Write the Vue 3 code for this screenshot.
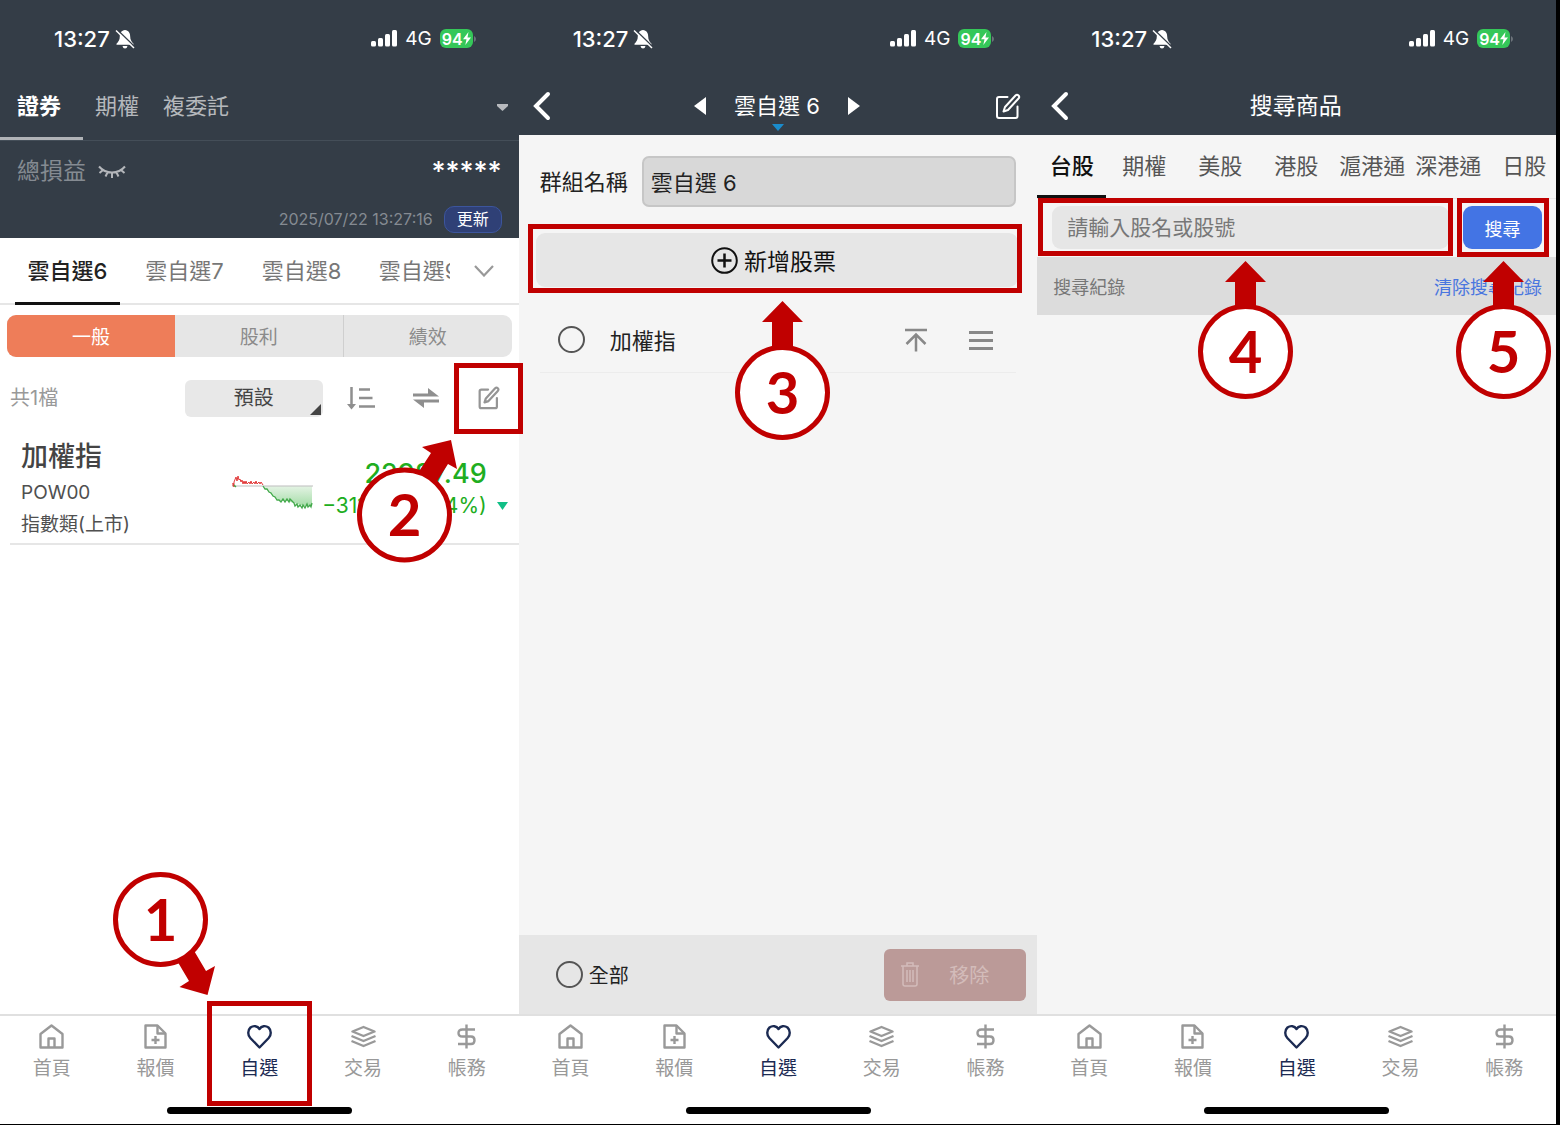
<script setup>
import { ref } from 'vue'

const screens = ['watchlist', 'edit', 'search']

const accounts = ['證券', '期權', '複委託']
const groups = ['雲自選6', '雲自選7', '雲自選8', '雲自選9']
const modes = ['一般', '股利', '績效']
const markets = ['台股', '期權', '美股', '港股', '滬港通', '深港通', '日股']

const account = ref('證券')
const group = ref('雲自選6')
const mode = ref('一般')
const market = ref('台股')

const groupName = ref('雲自選 6')
const keyword = ref('')
const picked = ref(false)
const pickAll = ref(false)

const navItems = [
    { name: '首頁', paths: ['M1.5 10 12.5 1.5 23.5 10V23.5H1.5Z', 'M9.5 23.5V14.5H15.5V23.5'] },
    { name: '報價', paths: ['M2.5 1.5H14.5L22.5 9.5V23.5H2.5Z', 'M14.5 1.5V9.5H22.5', 'M12.5 12V20M8.5 16H16.5'] },
    { name: '自選', paths: ['M12.5 23.5 3.3 14C.4 11 .8 6 3.5 3.500 6.500 1.300 10.500 1.800 12.500 5 14.500 1.800 18.500 1.300 21.500 3.500 24.200 6 24.600 11 21.700 14Z'] },
    { name: '交易', paths: ['M12.5 3 23.5 7.500 12.500 12 1.500 7.500Z', 'M.5 12 12.500 17 24.500 12', 'M.5 17 12.500 22 24.500 17'] },
    { name: '帳務', paths: ['M21 5.500H8.500Q4.500 5.500 4.500 9T8.500 12.500H17Q20.500 12.500 20.500 16.200T17 20H4', 'M12.500 .5V24.500'] }
]
</script>

<template>
    <main class="board">
        <section v-for="screen in screens" :key="screen" class="phone" :class="screen">
            <div class="status">
                <span class="time">13:27</span>
                <svg class="bell" viewBox="0 0 20 20">
                    <path d="M10 1C6.500 1.300 4.800 4 4.800 7.500 4.800 11 3.500 12.500 1.500 14.800V15.800H18.500V14.800C16.500 12.500 15.200 11 15.200 7.500 15.200 4 13.500 1.300 10 1ZM7.500 17H12.500Q12 19.500 10 19.500T7.500 17Z" fill="#fff" />
                    <path d="M2.500 1 20 18" stroke="#343d47" stroke-width="1.500" />
                    <path d="M1 1.500 19 19" stroke="#fff" stroke-width="1.500" />
                </svg>
                <svg class="signal" viewBox="0 0 26 17">
                    <rect x="0" y="11" width="5" height="5.500" rx="1.500" />
                    <rect x="7" y="8" width="5" height="8.500" rx="1.500" />
                    <rect x="14" y="4" width="5" height="12.500" rx="1.500" />
                    <rect x="21" y="0" width="5" height="16.500" rx="1.500" />
                </svg>
                <span class="network">4G</span>
                <span class="battery">94<svg viewBox="0 0 8 13"><path d="M5.500 0 0 7.200H3.500L2.300 13 8 5.500H4.500Z" fill="#fff" /></svg></span>
                <svg class="tip" width="2" height="6" viewBox="0 0 2 6"><path d="M0 0Q2 1 2 3T0 6Z" fill="#6d747b" /></svg>
            </div>

            <template v-if="screen === 'watchlist'">
                <nav class="accounts">
                    <button v-for="item in accounts" :key="item" :class="{ active: account === item }" @click="account = item">{{ item }}</button>
                    <button class="more" aria-label="更多"><svg width="11" height="7" viewBox="0 0 11 7"><path d="M0 0H11V2L5.500 7 0 2Z" fill="#b7babe" /></svg></button>
                </nav>
                <div class="summary">
                    <div class="profit">
                        <span class="profit-label">總損益</span>
                        <svg width="28" height="14" viewBox="0 0 28 14" fill="none" stroke="#b4b7bb" stroke-width="2">
                            <path d="M1 2.500C8 10.500 20 10.500 27 2.500M5 6 1.500 9M9.500 8.500 7.500 12.500M14 9V14M18.500 8.500 20.500 12.500M23 6 26.500 9" />
                        </svg>
                        <strong>*****</strong>
                    </div>
                    <div class="updated">
                        <time>2025/07/22 13:27:16</time>
                        <button>更新</button>
                    </div>
                </div>

                <nav class="groups">
                    <div class="group-list">
                        <button v-for="item in groups" :key="item" :class="{ active: group === item }" @click="group = item">{{ item }}</button>
                    </div>
                    <button class="expand" aria-label="展開">
                        <svg width="20" height="12" viewBox="0 0 20 12"><path d="M1 1 10 10.500 19 1" fill="none" stroke="#999" stroke-width="2.200" /></svg>
                    </button>
                </nav>

                <div class="segments">
                    <button v-for="item in modes" :key="item" :class="{ active: mode === item }" @click="mode = item">{{ item }}</button>
                </div>

                <div class="toolbar">
                    <span class="count">共1檔</span>
                    <label class="sorter">
                        <select aria-label="排序"><option>預設</option></select>
                    </label>
                    <div class="tools">
                        <button aria-label="升降冪">
                            <svg width="28" height="24" viewBox="0 0 28 24" fill="none" stroke="#8f8f8f" stroke-width="2.500">
                                <path d="M4.500 1V19M12 3.500H23M12 12H25.500M12 20.500H28" />
                                <path d="M0 18H9L4.500 23.500Z" fill="#8f8f8f" stroke="none" />
                            </svg>
                        </button>
                        <button aria-label="切換">
                            <svg width="26" height="22" viewBox="0 0 26 22" fill="#8f8f8f">
                                <path d="M0 6.500H15V1L26 9.500H0ZM26 12.500H0L11 21V15.500H26Z" />
                            </svg>
                        </button>
                        <button class="target" aria-label="編輯">
                            <svg width="23" height="24" viewBox="0 0 26 27" fill="none" stroke="#959595" stroke-width="2.500" stroke-linejoin="round" stroke-linecap="round">
                                <path d="M12.500 4H5Q3 4 3 6V23Q3 25 5 25H20.500Q22.500 25 22.500 23V13.500" />
                                <path d="M20.500 2.500Q22 1 23.500 2.500T23.500 5.500L13 17 8.500 18.500 10 14Z" />
                            </svg>
                            <span class="frame frame-edit">
                                <svg class="callout" width="102" height="124" viewBox="0 0 102 124">
                                    <path class="arrow" d="M94 0 100 29 91 24 77 46 59 36 74 13 65 7Z" />
                                    <circle cx="47.500" cy="75" r="45" />
                                    <text x="47.500" y="96">2</text>
                                </svg>
                            </span>
                        </button>
                    </div>
                </div>

                <article class="stock">
                    <div class="stock-info">
                        <h2>加權指</h2>
                        <p class="code">POW00</p>
                        <p class="kind">指數類(上市)</p>
                    </div>
                    <svg class="trend" width="82" height="38" viewBox="0 0 82 38" fill="none">
                        <defs>
                            <linearGradient id="fall" x1="0" y1="0" x2="0" y2="1">
                                <stop offset="0" stop-color="#e4f3e4" />
                                <stop offset="1" stop-color="#a5dda8" />
                            </linearGradient>
                        </defs>
                        <path d="M31 13H80V32L72 33 62 30 55 28 48 28 41 23 35 17Z" fill="url(#fall)" />
                        <path d="M0 13H81" stroke="#bdbdbd" />
                        <path d="M1 13V10L2 14V9L4 4 5 8 6 3 7 7 8 6 9 9 10 7 11 11 12 8 13 11 14 8 15 11 17 9 18 11 19 8 20 11 22 9 23 11 24 8 25 11 27 9 28 11 29 9 31 12" stroke="#e23b3b" />
                        <path d="M2 12 4 14M31 13 33 16 35 16 37 19 39 20 41 23 43 24 45 27 47 27 49 29 51 26 53 29 55 26 57 29 58 26 60 28 62 30 63 33 65 31 66 34 68 32 70 35 71 32 73 35 75 31 76 34 78 32 79 34 80 30" stroke="#42a94a" stroke-width="1.300" />
                    </svg>
                    <div class="quote">
                        <strong>22987.49</strong>
                        <span class="change">−311.97(−1.34%)</span>
                        <svg width="11" height="8" viewBox="0 0 11 8"><path d="M0 0H11L5.500 8Z" fill="#10bf86" /></svg>
                    </div>
                </article>
                <div class="filler"></div>
            </template>

            <template v-else-if="screen === 'edit'">
                <header class="titlebar">
                    <button class="back" aria-label="返回">
                        <svg width="18" height="30" viewBox="0 0 18 30"><path d="M15 3 3 15 15 27" fill="none" stroke="#fff" stroke-width="4" stroke-linecap="round" /></svg>
                    </button>
                    <div class="switcher">
                        <button aria-label="上一組"><svg width="12" height="18" viewBox="0 0 12 18"><path d="M12 0V18L0 9Z" fill="#fff" /></svg></button>
                        <h1 class="picker">雲自選 6</h1>
                        <button aria-label="下一組"><svg width="12" height="18" viewBox="0 0 12 18"><path d="M0 0V18L12 9Z" fill="#fff" /></svg></button>
                    </div>
                    <button class="rename" aria-label="重新命名">
                        <svg width="26" height="27" viewBox="0 0 26 27" fill="none" stroke="#fff" stroke-width="2" stroke-linejoin="round" stroke-linecap="round">
                            <path d="M12.500 4H4Q2 4 2 6V23Q2 25 4 25H20.500Q22.500 25 22.500 23V13.500" />
                            <path d="M20.500 2.500Q22 1 23.500 2.500T23.500 5.500L13 17 8.500 18.500 10 14Z" />
                        </svg>
                    </button>
                </header>

                <div class="name-row">
                    <label for="group-name">群組名稱</label>
                    <input id="group-name" v-model="groupName" type="text" />
                </div>

                <button class="add target">
                    <svg width="27" height="27" viewBox="0 0 27 27" fill="none" stroke="#111" stroke-width="2">
                        <circle cx="13.500" cy="13.500" r="12.300" />
                        <path d="M13.500 6.500V20.500M6.500 13.500H20.500" stroke-width="2.500" />
                    </svg>
                    新增股票
                    <span class="frame frame-add">
                        <svg class="callout" width="95" height="139" viewBox="0 0 95 139">
                            <path class="arrow" d="M47.500 0 68 21H58V50H37V21H27Z" />
                            <circle cx="47.500" cy="91.500" r="45" />
                            <text x="47.500" y="113">3</text>
                        </svg>
                    </span>
                </button>

                <div class="item">
                    <input id="pick" v-model="picked" type="checkbox" />
                    <label for="pick">加權指</label>
                    <button aria-label="置頂">
                        <svg width="22" height="24" viewBox="0 0 22 24" fill="none" stroke="#888" stroke-width="2.500"><path d="M0 2H22M11 23.500V7M1.500 16 11 6.500 20.500 16" /></svg>
                    </button>
                    <button aria-label="拖曳排序">
                        <svg width="24" height="22" viewBox="0 0 24 22" stroke="#888" stroke-width="3"><path d="M0 3.500H24M0 11.500H24M0 19.500H24" /></svg>
                    </button>
                </div>
                <div class="filler"></div>

                <div class="bulk">
                    <input id="pick-all" v-model="pickAll" type="checkbox" />
                    <label for="pick-all">全部</label>
                    <button class="remove" disabled>
                        <svg width="18" height="25" viewBox="0 0 18 25" fill="none" stroke="#d3bcba" stroke-width="1.500"><path d="M0 4H18M6 3.500V1H12V3.500M2 4V22Q2 24 4 24H14Q16 24 16 22V4M6 8V20M9 8V20M12 8V20" /></svg>
                        <span>移除</span>
                    </button>
                </div>
            </template>

            <template v-else>
                <header class="titlebar">
                    <button class="back" aria-label="返回">
                        <svg width="18" height="30" viewBox="0 0 18 30"><path d="M15 3 3 15 15 27" fill="none" stroke="#fff" stroke-width="4" stroke-linecap="round" /></svg>
                    </button>
                    <h1>搜尋商品</h1>
                </header>

                <nav class="markets">
                    <button v-for="item in markets" :key="item" :class="{ active: market === item }" @click="market = item">{{ item }}</button>
                </nav>

                <form class="search-row" @submit.prevent>
                    <div class="field target">
                        <input v-model="keyword" type="text" placeholder="請輸入股名或股號" aria-label="請輸入股名或股號" />
                        <span class="frame frame-field">
                            <svg class="callout" width="95" height="139" viewBox="0 0 95 139">
                                <path class="arrow" d="M47.500 0 68 21H58V50H37V21H27Z" />
                                <circle cx="47.500" cy="90.500" r="45" />
                                <text x="47.500" y="112">4</text>
                            </svg>
                        </span>
                    </div>
                    <button class="submit target">
                        搜尋
                        <span class="frame frame-submit">
                            <svg class="callout" width="95" height="139" viewBox="0 0 95 139">
                                <path class="arrow" d="M47.500 0 68 21H58V50H37V21H27Z" />
                                <circle cx="47.500" cy="90.500" r="45" />
                                <text x="47.500" y="112">5</text>
                            </svg>
                        </span>
                    </button>
                </form>

                <div class="history">
                    <span>搜尋紀錄</span>
                    <button>清除搜尋紀錄</button>
                </div>
                <div class="filler"></div>
            </template>

            <nav class="navbar">
                <a v-for="item in navItems" :key="item.name" href="#" :class="{ active: item.name === '自選' }">
                    <svg width="25" height="25" viewBox="0 0 25 25" fill="none" stroke="currentColor" stroke-width="2.400" stroke-linejoin="round">
                        <path v-for="d in item.paths" :key="d" :d="d" />
                    </svg>
                    <span>{{ item.name }}</span>
                    <span v-if="screen === 'watchlist' && item.name === '自選'" class="frame frame-nav">
                        <svg class="callout" width="104" height="124" viewBox="0 0 104 124">
                            <path class="arrow" d="M94.500 123 66.500 115 76 109 63 87 80 77 93 99 102 94Z" />
                            <circle cx="47.500" cy="47.500" r="45" />
                            <text x="47.500" y="69">1</text>
                        </svg>
                    </span>
                </a>
            </nav>
            <div class="home-bar"></div>
        </section>
    </main>
</template>

<style>
body {
    margin: 0;
    background: #000;
}
</style>

<style scoped>
* {
    box-sizing: border-box;
}

.board {
    display: flex;
    min-height: 100vh;
    padding: 0 4px 1px 0;
    background: #000;
    font-family: Inter, "Noto Sans CJK TC", sans-serif;
    font-size: 22px;
    color: #222;
}

button,
input,
select {
    font: inherit;
    color: inherit;
}

button {
    padding: 0;
    border: none;
    background: none;
    cursor: pointer;
    white-space: nowrap;
}

svg {
    display: block;
    flex: none;
}

h1,
h2,
p {
    margin: 0;
    font-weight: 400;
}

.phone {
    flex: 1 1 0;
    min-width: 0;
    display: flex;
    flex-direction: column;
    background: #f5f5f5;
}

.watchlist {
    position: relative;
    z-index: 1;
    background: #fff;
}

.filler {
    flex: 1;
}

/* status bar */
.status {
    display: flex;
    align-items: center;
    height: 77px;
    padding: 0 43px 0 54px;
    background: #343d47;
    color: #fff;
}

.time {
    font-weight: 500;
}

.bell {
    width: 20px;
    height: 20px;
    margin: 0 auto 0 5px;
}

.signal {
    width: 26px;
    height: 17px;
    fill: #fff;
}

.network {
    margin: 0 8px;
    font-size: 19px;
}

.battery {
    display: flex;
    align-items: center;
    height: 19px;
    padding: 0 2px;
    border-radius: 6px;
    background: #35c759;
    font-size: 16px;
    font-weight: 600;
}

.battery svg {
    width: 8px;
    height: 13px;
}

.tip {
    margin-left: 1px;
}

/* numbered steps */
.target {
    position: relative;
}

.frame {
    position: absolute;
    border: 5px solid #c00000;
    pointer-events: none;
}

.callout {
    position: absolute;
    z-index: 2;
    overflow: visible;
}

.callout circle {
    fill: #fff;
    stroke: #c00000;
    stroke-width: 5;
}

.callout .arrow {
    fill: #c00000;
}

.callout text {
    fill: #c00000;
    font-family: Lato, sans-serif;
    font-size: 58px;
    font-weight: 700;
    text-anchor: middle;
}

.frame-nav {
    inset: -15px -1px -1px 0;
}

.frame-nav .callout {
    left: -99px;
    top: -134px;
}

.frame-edit {
    inset: -23px -23px -24px -23px;
}

.frame-edit .callout {
    left: -102px;
    top: 72px;
}

.frame-add {
    inset: -9px -4px -6px -8px;
}

.frame-add .callout {
    left: 202px;
    top: 72px;
}

.frame-field {
    inset: -8px -4px -7px -14px;
}

.frame-field .callout {
    left: 155px;
    top: 58px;
}

.frame-submit {
    inset: -8px -7px -8px -6px;
}

.frame-submit .callout {
    left: -6px;
    top: 58px;
}

/* watchlist screen */
.accounts {
    display: flex;
    height: 64px;
    border-bottom: 1px solid #444e58;
    background: #343d47;
    color: #b5b8bc;
}

.accounts button {
    padding: 0 12px 7px;
    border-bottom: 3px solid transparent;
}

.accounts button:first-child {
    padding: 0 22px 7px 17px;
}

.accounts button.active {
    border-color: #b0b3b7;
    color: #fff;
    font-weight: 600;
}

.accounts .more {
    margin-left: auto;
    padding: 0 11px 0;
}

.summary {
    height: 97px;
    background: #343d47;
    color: #858b92;
}

.profit {
    display: flex;
    align-items: center;
    height: 60px;
    padding: 0 17px;
    gap: 12px;
}

.profit-label {
    font-size: 23px;
    line-height: 32px;
}

.profit strong {
    margin-left: auto;
    color: #fff;
    font-size: 27px;
    font-weight: 500;
}

.updated {
    display: flex;
    align-items: center;
    justify-content: flex-end;
    gap: 11px;
    height: 36px;
    padding-right: 17px;
}

.updated time {
    font-size: 16px;
}

.updated button {
    width: 58px;
    height: 27px;
    border: 1px solid #3c559d;
    border-radius: 10px;
    background: #2f4076;
    color: #fff;
    font-size: 16px;
    line-height: 20px;
}

.groups {
    display: flex;
    height: 67px;
    padding-left: 15px;
    border-bottom: 2px solid #e6e6e6;
}

.group-list {
    display: flex;
    gap: 12px;
    flex: 1;
    margin-bottom: -2px;
    overflow: hidden;
    color: #777;
}

.group-list button {
    flex: none;
    width: 105px;
    padding-bottom: 2px;
    border-bottom: 3px solid transparent;
}

.group-list button.active {
    border-color: #111;
    color: #222;
    font-weight: 500;
}

.expand {
    width: 69px;
    padding-left: 24px;
}

.segments {
    display: flex;
    height: 42px;
    margin: 10px 7px 0;
    border-radius: 9px;
    background: #e6e6e6;
    overflow: hidden;
    color: #8b8b8b;
    font-size: 19px;
}

.segments button {
    flex: 1;
    padding-bottom: 2px;
}

.segments button:last-child {
    border-left: 1px solid #cfcfcf;
}

.segments button.active {
    background: #ee7d59;
    color: #fff;
}

.toolbar {
    display: flex;
    align-items: center;
    gap: 24px;
    height: 82px;
    padding: 0 19px 0 10px;
}

.count {
    flex: 1;
    color: #999;
    font-size: 20px;
    line-height: 28px;
}

.sorter {
    position: relative;
    width: 138px;
    height: 37px;
    border-radius: 6px;
    background: #e8e8e8;
}

.sorter::after {
    content: "";
    position: absolute;
    right: 2px;
    bottom: 2px;
    border-bottom: 11px solid #444;
    border-left: 11px solid transparent;
}

.sorter select {
    width: 100%;
    height: 100%;
    padding: 0;
    border: none;
    appearance: none;
    background: none;
    color: #444;
    font-size: 20px;
    text-align-last: center;
}

.tools {
    display: flex;
    align-items: center;
    gap: 38px;
}

.stock {
    display: flex;
    margin-left: 10px;
    padding: 0 11px 4px;
    border-bottom: 2px solid #e6e6e6;
    color: #505050;
}

.stock-info {
    flex: 1;
}

.stock h2 {
    color: #444;
    font-size: 27px;
    font-weight: 500;
    line-height: 36px;
}

.code {
    font-size: 19px;
    line-height: 36px;
}

.kind {
    font-size: 19px;
    line-height: 28px;
}

.trend {
    margin: 34px 8px 0 0;
}

.quote {
    display: grid;
    grid-template-columns: auto 11px;
    column-gap: 10px;
    align-content: start;
    align-items: center;
    padding-top: 18px;
    color: #20ad20;
    text-align: right;
}

.quote strong {
    grid-column: 1;
    font-size: 27px;
    font-weight: 500;
    line-height: 34px;
}

.change {
    grid-column: 1;
    font-size: 21px;
    line-height: 30px;
}

/* edit and search headers */
.titlebar {
    display: grid;
    grid-template-columns: 1fr auto 1fr;
    align-items: center;
    height: 58px;
    padding: 0 16px 0 14px;
    background: #343d47;
    color: #fff;
}

.titlebar h1 {
    font-size: 23px;
    line-height: 32px;
}

.back {
    justify-self: start;
}

.rename {
    justify-self: end;
}

.switcher {
    display: flex;
    align-items: center;
    gap: 28px;
}

.titlebar .picker {
    position: relative;
    font-size: 22px;
}

.picker::after {
    content: "";
    position: absolute;
    left: 50%;
    bottom: -9px;
    margin-left: -5px;
    border-top: 7px solid #1a8ccc;
    border-left: 6px solid transparent;
    border-right: 6px solid transparent;
}

/* edit screen */
.name-row {
    display: flex;
    align-items: center;
    gap: 14px;
    margin: 21px 21px 0;
    line-height: 32px;
}

.name-row input {
    flex: 1;
    min-width: 0;
    height: 51px;
    padding: 0 7px 2px;
    border: 2px solid #c6c6c6;
    border-radius: 7px;
    background: #d8d8d8;
}

.add {
    display: flex;
    align-items: center;
    justify-content: center;
    gap: 6px;
    height: 54px;
    margin: 26px 19px 0 17px;
    padding-right: 7px;
    border-radius: 9px;
    background: #e6e6e6;
    color: #111;
    font-size: 23px;
}

.item {
    display: flex;
    align-items: center;
    height: 66px;
    margin: 20px 21px 0;
    padding: 0 23px 0 18px;
    border-bottom: 1px solid #ececec;
}

.item label {
    flex: 1;
    margin-left: 25px;
    padding-bottom: 2px;
}

.item button + button {
    margin-left: 42px;
}

input[type="checkbox"] {
    width: 27px;
    height: 27px;
    margin: 0;
    border: 2px solid #555;
    border-radius: 50%;
    appearance: none;
}

input[type="checkbox"]:checked {
    background: #444;
}

.bulk {
    display: flex;
    align-items: center;
    height: 79px;
    padding: 0 11px 0 37px;
    background: #e6e6e6;
    font-size: 20px;
}

.bulk label {
    margin-left: 6px;
}

.remove {
    display: flex;
    align-items: center;
    gap: 30px;
    width: 142px;
    height: 52px;
    margin-left: auto;
    padding-left: 17px;
    border-radius: 6px;
    background: #bb9a98;
    color: #d3bcba;
}

/* search screen */
.markets {
    display: flex;
    height: 64px;
    border-bottom: 1px solid #e6e6e6;
    overflow: hidden;
    color: #555;
}

.markets button {
    flex: 0 0 76px;
    padding-bottom: 2px;
    border-bottom: 3px solid transparent;
}

.markets button:first-child {
    flex-basis: 69px;
}

.markets button.active {
    border-color: #111;
    color: #111;
    font-weight: 500;
}

.search-row {
    display: flex;
    gap: 14px;
    padding: 7px 14px 8px 15px;
}

.field {
    flex: 1;
}

.field input {
    width: 100%;
    height: 43px;
    padding: 0 15px;
    border: none;
    border-radius: 9px;
    background: #e6e6e6;
    font-size: 21px;
}

.field input::placeholder {
    color: #777;
}

.submit {
    width: 79px;
    height: 43px;
    border-radius: 9px;
    background: #4374e4;
    color: #fff;
    font-size: 18px;
}

.history {
    display: flex;
    align-items: center;
    justify-content: space-between;
    height: 58px;
    padding: 0 14px 0 16px;
    background: #dcdcdc;
    color: #777;
    font-size: 18px;
}

.history button {
    color: #4a76df;
}

/* bottom navigation */
.navbar {
    display: flex;
    border-top: 2px solid #e0e0e0;
    background: #fff;
    font-size: 19px;
}

.navbar a {
    position: relative;
    flex: 1;
    display: flex;
    flex-direction: column;
    align-items: center;
    gap: 8px;
    height: 89px;
    padding-top: 8px;
    color: #999;
    line-height: 24px;
    text-decoration: none;
}

.navbar a.active {
    color: #1b2a52;
}

.home-bar {
    height: 19px;
    background: #fff;
}

.home-bar::before {
    content: "";
    display: block;
    width: 185px;
    height: 7px;
    margin: 2px auto 0;
    border-radius: 4px;
    background: #000;
}
</style>
